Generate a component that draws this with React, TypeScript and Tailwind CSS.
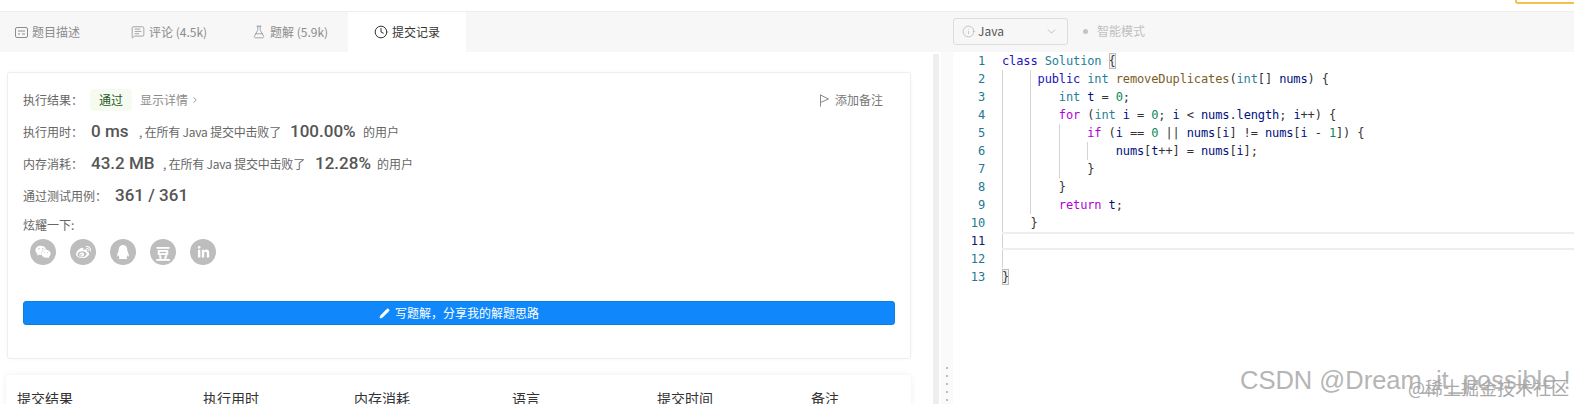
import { Clock, FlaskConical, MessageSquareText, Pencil, ChevronDown, ChevronRight, Info } from "lucide-react";
import { FaWeixin, FaWeibo, FaQq, FaLinkedinIn } from "react-icons/fa";
import type { ReactNode } from "react";

const sans = "font-['Noto_Sans_CJK_SC',sans-serif]";
const num = "shrink-0 whitespace-nowrap font-['Roboto','Noto_Sans_CJK_SC',sans-serif] font-medium text-[17px] text-[#555]";
const beat = "shrink-0 whitespace-nowrap tracking-[-0.2px]";

function DescIcon() {
  return (
    <svg width="13" height="11" viewBox="0 0 13 11" fill="none" stroke="currentColor" strokeWidth="1">
      <rect x="0.5" y="0.5" width="12" height="10" rx="1.5" />
      <path d="M3 4h7M3 7h2M7 7h3" />
    </svg>
  );
}

function FlagIcon() {
  return (
    <svg width="11" height="13" viewBox="0 0 11 13" fill="none" stroke="#888" strokeWidth="1">
      <path d="M1.5 0.5V12.5M1.5 1L9.5 5L1.5 8.5" />
    </svg>
  );
}

function Tab({ icon, label, className }: { icon: ReactNode; label: string; className: string }) {
  return (
    <div className={"flex h-10 items-center gap-[4px] text-[12px] " + className}>
      {icon}
      <span>{label}</span>
    </div>
  );
}

function Row({ label, children }: { label: string; children: ReactNode }) {
  return (
    <div className="flex h-8 items-center px-[15px] text-[12px] text-[#666]">
      <span>{label}</span>
      {children}
    </div>
  );
}

function Share({ children }: { children: ReactNode }) {
  return (
    <div className="flex h-[26px] w-[26px] items-center justify-center rounded-full bg-[#bdbdbd] text-white">
      {children}
    </div>
  );
}

type Tok = [string, string];
const kw = "text-[#1a12c0]";
const ty = "text-[#267f99]";
const ctl = "text-[#af00db]";
const fn = "text-[#795e26]";
const vr = "text-[#001080]";
const nb = "text-[#09885a]";
const pl = "text-[#333]";

const lines: { guides: number[]; toks: Tok[] }[] = [
  { guides: [], toks: [["class ", kw], ["Solution ", ty], ["{", pl]] },
  { guides: [0, 4], toks: [["     ", pl], ["public ", kw], ["int ", ty], ["removeDuplicates", fn], ["(", pl], ["int", ty], ["[] ", pl], ["nums", vr], [") {", pl]] },
  { guides: [0, 4], toks: [["        ", pl], ["int ", ty], ["t", vr], [" = ", pl], ["0", nb], [";", pl]] },
  { guides: [0, 4], toks: [["        ", pl], ["for ", ctl], ["(", pl], ["int ", ty], ["i", vr], [" = ", pl], ["0", nb], ["; ", pl], ["i", vr], [" < ", pl], ["nums", vr], [".", pl], ["length", vr], ["; ", pl], ["i", vr], ["++) {", pl]] },
  { guides: [0, 4, 8], toks: [["            ", pl], ["if ", ctl], ["(", pl], ["i", vr], [" == ", pl], ["0", nb], [" || ", pl], ["nums", vr], ["[", pl], ["i", vr], ["] != ", pl], ["nums", vr], ["[", pl], ["i", vr], [" - ", pl], ["1", nb], ["]) {", pl]] },
  { guides: [0, 4, 8, 12], toks: [["                ", pl], ["nums", vr], ["[", pl], ["t", vr], ["++] = ", pl], ["nums", vr], ["[", pl], ["i", vr], ["];", pl]] },
  { guides: [0, 4, 8], toks: [["            }", pl]] },
  { guides: [0, 4], toks: [["        }", pl]] },
  { guides: [0, 4], toks: [["        ", pl], ["return ", ctl], ["t", vr], [";", pl]] },
  { guides: [0], toks: [["    }", pl]] },
  { guides: [0], toks: [] },
  { guides: [0], toks: [] },
  { guides: [], toks: [["}", pl]] },
];

export default function App() {
  return (
    <div className={"relative flex h-[404px] w-[1574px] flex-col overflow-hidden bg-white " + sans}>
      <div className="flex h-3 shrink-0 justify-end border-b border-[#eee]">
        <div className="h-[4px] w-[59px] rounded-bl-[3px] border-b-2 border-l-2 border-[#f5c04e]" />
      </div>
      <div className="flex min-h-0 flex-1">
        {/* left panel */}
        <div className="flex w-[941px] shrink-0 flex-col">
          <div className="flex h-10 shrink-0 bg-[#f7f7f7] text-[#8c8c8c]">
            <Tab icon={<DescIcon />} label="题目描述" className="w-[131px] pl-[15px]" />
            <Tab icon={<MessageSquareText size={14} strokeWidth={1.3} />} label="评论 (4.5k)" className="w-[121px]" />
            <Tab icon={<FlaskConical size={14} strokeWidth={1.3} />} label="题解 (5.9k)" className="w-[96px]" />
            <Tab
              icon={<Clock size={14} strokeWidth={1.7} />}
              label="提交记录"
              className="w-[118px] justify-center bg-white text-[#333]"
            />
          </div>
          <div className="flex min-h-0 flex-1">
            <div className="w-[933px] shrink-0 overflow-hidden pl-[7px] pr-[22px] pt-5">
              <div className="h-[287px] rounded-[3px] border border-[#eee] bg-white pt-[11px] shadow-[0_0_4px_rgba(0,0,0,0.03)]">
                <Row label="执行结果：">
                  <span className="ml-[7px] rounded-[4px] bg-[#f5fbf0] px-[9px] py-[2px] text-[#2b5a2b]">通过</span>
                  <span className="ml-[8px] text-[#8c8c8c]">显示详情</span>
                  <ChevronRight size={10} className="ml-[2px] text-[#8c8c8c]" />
                  <span className="ml-auto flex items-center gap-[5px] pr-[12px] text-[#777]">
                    <FlagIcon />
                    添加备注
                  </span>
                </Row>
                <Row label="执行用时：">
                  <span className={"ml-[8px] w-[48px] " + num}>0 ms</span>
                  <span className={"w-[151px] " + beat}>, 在所有 Java 提交中击败了</span>
                  <span className={"w-[73px] " + num}>100.00%</span>
                  <span>的用户</span>
                </Row>
                <Row label="内存消耗：">
                  <span className={"ml-[8px] w-[72px] " + num}>43.2 MB</span>
                  <span className={"w-[152px] " + beat}>, 在所有 Java 提交中击败了</span>
                  <span className={"w-[62px] " + num}>12.28%</span>
                  <span>的用户</span>
                </Row>
                <Row label="通过测试用例：">
                  <span className={"ml-[8px] " + num}>361 / 361</span>
                </Row>
                <div className="mt-[4px] px-[15px] text-[12px] leading-[18px] text-[#666]">炫耀一下:</div>
                <div className="ml-[22px] mt-[5px] flex gap-[14px]">
                  <Share><FaWeixin size={16} /></Share>
                  <Share><FaWeibo size={15} /></Share>
                  <Share><FaQq size={14} /></Share>
                  <Share><span className="text-[15px] font-bold leading-none">豆</span></Share>
                  <Share><FaLinkedinIn size={13} /></Share>
                </div>
                <div className="mx-[15px] mt-[36px] flex h-6 items-center justify-center gap-[5px] rounded-[3px] border border-[#0d7fe0] bg-[#1088fb] text-[12px] text-white">
                  <Pencil size={11} fill="white" strokeWidth={1.5} />
                  <span>写题解，分享我的解题思路</span>
                </div>
              </div>
              <div className="-ml-px mt-[16px] flex h-[60px] rounded-t-[3px] bg-white pt-[13px] text-[14px] leading-[20px] text-[#333] shadow-[0_0_6px_rgba(0,0,0,0.07)]">
                <span className="ml-[11px] w-[186px]">提交结果</span>
                <span className="w-[151px]">执行用时</span>
                <span className="w-[158px]">内存消耗</span>
                <span className="w-[145px]">语言</span>
                <span className="w-[154px]">提交时间</span>
                <span>备注</span>
              </div>
            </div>
            <div className="mt-[2px] w-[6px] shrink-0 bg-[#eee]" />
          </div>
        </div>
        {/* right panel */}
        <div className="flex min-w-0 flex-1 flex-col">
          <div className="flex h-10 shrink-0 items-center gap-[15px] bg-[#f7f7f7] pb-[2px] pl-[12px]">
            <div className="flex h-[27px] w-[115px] items-center rounded-[3px] border border-[#ddd] pl-[8px] pr-[9px] text-[12px] text-[#555]">
              <Info size={13} strokeWidth={1} className="text-[#999]" />
              <span className="ml-[3px]">Java</span>
              <ChevronDown size={13} strokeWidth={1.3} className="ml-auto text-[#aaa]" />
            </div>
            <div className="flex items-center gap-[9px] text-[12px] text-[#c0c0c0]">
              <span className="h-[5px] w-[5px] rounded-full bg-[#c4c4c4]" />
              智能模式
            </div>
          </div>
          <div className="flex min-h-0 flex-1">
            <div className="w-[12px] shrink-0 bg-[#fafafa] pl-[5px] pt-[315px]">
              <div className="flex flex-col gap-[6px]">
                {[0, 1, 2, 3, 4].map((d) => (
                  <span key={d} className="h-[2px] w-[2px] bg-[#bbb]" />
                ))}
              </div>
            </div>
            <div className="min-w-0 flex-1 font-['DejaVu_Sans_Mono',monospace] text-[12px] tracking-[-0.12px]">
              {lines.map((line, i) => (
                <div key={i} className="flex h-[18px] leading-[18px]">
                  <span className={"w-[32px] shrink-0 text-right " + (i === 10 ? "text-[#0b216f]" : "text-[#237893]")}>
                    {i + 1}
                  </span>
                  <div
                    className={
                      "relative ml-[17px] flex-1 whitespace-pre " +
                      (i === 10 ? "border-y-2 border-[#eee] leading-[14px]" : "")
                    }
                  >
                    {line.guides.map((g) => (
                      <span
                        key={g}
                        className="absolute bottom-0 top-0 w-px bg-[#d3d3d3]"
                        style={{ left: g * 7.1 }}
                      />
                    ))}
                    {line.toks.map((t, j) => (
                      <span key={j} className={t[1]}>
                        {t[0]}
                      </span>
                    ))}
                    {(i === 0 || i === 12) && (
                      <span
                        className="absolute top-[1px] h-[16px] w-[7px] border border-[#bbb] bg-[#7f7f7f]/10"
                        style={{ left: i === 0 ? 106.5 : 0 }}
                      />
                    )}
                  </div>
                </div>
              ))}
            </div>
          </div>
        </div>
      </div>
      {/* watermarks */}
      <div className="absolute left-[1240px] top-[365px] font-['Liberation_Sans',sans-serif] text-[25.5px] leading-[30px] text-[#b5b5b5] whitespace-nowrap">
        CSDN @Dream_it_possible !
      </div>
      <div className="absolute left-[1408px] top-[376px] text-[18px] leading-[22px] text-[#a8a8a8] whitespace-nowrap">
        @稀土掘金技术社区
      </div>
    </div>
  );
}
